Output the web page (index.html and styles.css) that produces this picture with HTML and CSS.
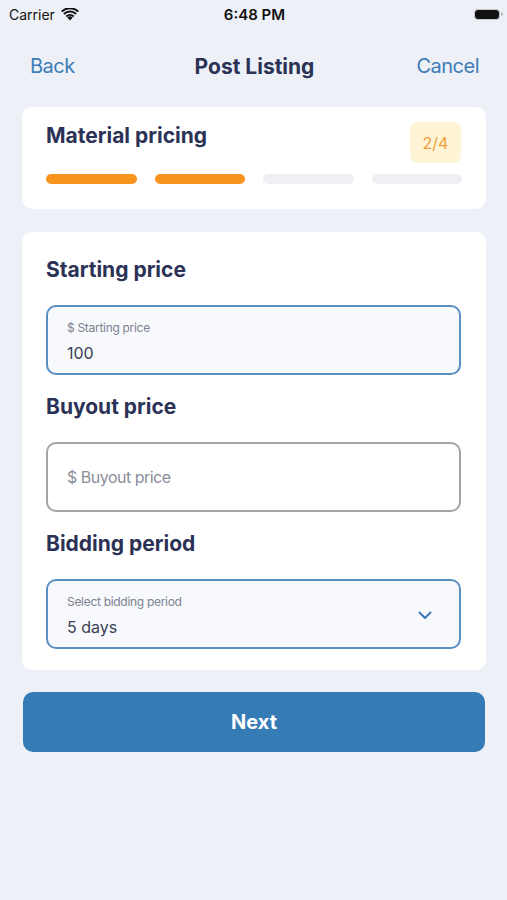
FILE: index.html
```html
<!DOCTYPE html>
<html lang="en">
<head>
    <meta charset="UTF-8">
    <meta name="viewport" content="width=device-width, initial-scale=1.0">
    <title>Post Listing</title>
    <link rel="stylesheet" href="styles.css">
</head>
<body>
    <div class="status-bar">
        <div class="carrier">
            Carrier
            <svg class="wifi" width="18" height="13" viewBox="0 0 18 13">
                <path d="M9 12.5 L6.3 9.6 A4 4 0 0 1 11.7 9.6 Z" fill="#111"/>
                <path d="M4.6 7.8 A6.4 6.4 0 0 1 13.4 7.8 L12.1 9.2 A4.6 4.6 0 0 0 5.9 9.2 Z" fill="#111"/>
                <path d="M2.2 5.3 A9.8 9.8 0 0 1 15.8 5.3 L14.5 6.7 A8 8 0 0 0 3.5 6.7 Z" fill="#111"/>
                <path d="M0 2.9 A13 13 0 0 1 18 2.9 L16.7 4.3 A11.2 11.2 0 0 0 1.3 4.3 Z" fill="#111"/>
            </svg>
        </div>
        <div class="time">6:48 PM</div>
        <div class="battery"><span class="battery-level"></span></div>
    </div>

    <div class="nav">
        <span class="nav-link">Back</span>
        <span class="nav-title">Post Listing</span>
        <span class="nav-link">Cancel</span>
    </div>

    <div class="content">
        <div class="card step-card">
            <div class="step-head">
                <h2>Material pricing</h2>
                <span class="step-badge">2/4</span>
            </div>
            <div class="steps">
                <span class="step done"></span>
                <span class="step done"></span>
                <span class="step"></span>
                <span class="step"></span>
            </div>
        </div>

        <form class="card form-card" id="pricingForm">
            <label class="field-title" for="startPrice">Starting price</label>
            <div class="field active">
                <span class="field-label">$ Starting price</span>
                <input type="text" id="startPrice" value="100">
            </div>

            <label class="field-title" for="buyoutPrice">Buyout price</label>
            <div class="field empty">
                <input type="text" id="buyoutPrice" placeholder="$ Buyout price">
            </div>

            <label class="field-title" for="period">Bidding period</label>
            <div class="field active select">
                <div>
                    <span class="field-label">Select bidding period</span>
                    <div class="field-value" id="period">5 days</div>
                </div>
                <svg class="chevron" width="14" height="9" viewBox="0 0 14 9">
                    <path d="M1.5 1.5 L7 7 L12.5 1.5" fill="none" stroke="#3a7ab5" stroke-width="2" stroke-linecap="round" stroke-linejoin="round"/>
                </svg>
            </div>
        </form>

        <button type="button" class="next-btn">Next</button>
    </div>
</body>
</html>
```

FILE: styles.css
```css
body {
    font-family: 'Inter', 'Noto Sans', sans-serif;
    background-color: #edf0f6;
    margin: 0;
    width: 507px;
    min-height: 900px;
}
.status-bar {
    height: 28px;
    display: flex;
    align-items: center;
    justify-content: space-between;
    padding: 0 7px 0 9px;
    font-size: 14px;
    color: #111;
}
.carrier {
    display: flex;
    align-items: center;
    gap: 6px;
    width: 120px;
}
.time {
    font-weight: 600;
    font-size: 15px;
}
.battery {
    width: 120px;
    display: flex;
    justify-content: flex-end;
}
.battery-level {
    display: block;
    width: 24px;
    height: 9px;
    background: #111;
    border: 1.5px solid #c4c6cc;
    border-radius: 4px;
    position: relative;
}
.battery-level::after {
    content: "";
    position: absolute;
    right: -4px;
    top: 2.5px;
    width: 2px;
    height: 4px;
    background: #b5b7bd;
    border-radius: 0 2px 2px 0;
}
.nav {
    height: 76px;
    display: flex;
    align-items: center;
    justify-content: space-between;
    padding: 0 28px 0 30px;
}
.nav-link {
    font-size: 20px;
    color: #3d7db8;
    width: 80px;
    letter-spacing: -0.5px;
}
.nav-link:last-child {
    text-align: right;
}
.nav-title {
    font-size: 21px;
    font-weight: 700;
    color: #2b3256;
}
.content {
    padding: 3px 21px 0 22px;
}
.card {
    background: #ffffff;
    border-radius: 10px;
    padding: 15px 24px 25px;
}
h2 {
    margin: 2px 0 0;
    font-size: 21px;
    line-height: 24px;
    font-weight: 700;
    color: #2b3256;
}
.step-head {
    display: flex;
    justify-content: space-between;
    align-items: flex-start;
}
.step-badge {
    width: 51px;
    height: 41px;
    border-radius: 8px;
    background: #fff3d6;
    color: #f0a038;
    font-size: 16px;
    display: flex;
    align-items: center;
    justify-content: center;
    margin-right: 1px;
}
.steps {
    display: grid;
    grid-template-columns: repeat(4, 1fr);
    gap: 18px;
    margin-top: 11px;
}
.step {
    height: 10px;
    border-radius: 5px;
    background: #eef0f4;
}
.step.done {
    background: #f7941d;
}
.form-card {
    margin-top: 23px;
    padding: 26px 24px 21px;
}
.field-title {
    display: block;
    font-size: 21px;
    line-height: 24px;
    font-weight: 700;
    color: #2b3256;
    margin-bottom: 23px;
}
.field {
    height: 70px;
    box-sizing: border-box;
    border: 2px solid #a3a4aa;
    border-radius: 10px;
    padding: 0 19px;
    margin: 0 1px 20px 0;
    display: flex;
    flex-direction: column;
    justify-content: center;
}
.field:last-child {
    margin-bottom: 0;
}
.field.active {
    border-color: #5b8fc2;
    background: #f7f9fc;
    justify-content: flex-start;
    padding-top: 13px;
}
.field-label {
    display: block;
    font-size: 12px;
    line-height: 16px;
    color: #7d8190;
    letter-spacing: -0.3px;
}
input, .field-value {
    border: none;
    outline: none;
    background: transparent;
    padding: 0;
    margin: 6px 0 0;
    font-family: inherit;
    font-size: 16px;
    line-height: 22px;
    color: #3a3f55;
    width: 100%;
}
.field.empty input {
    margin: 0;
}
input::placeholder {
    color: #8a8d9a;
    letter-spacing: -0.5px;
}
.field.select {
    flex-direction: row;
    justify-content: space-between;
    align-items: flex-start;
}
.chevron {
    margin: 17px 8px 0 0;
}
.next-btn {
    display: block;
    width: 462px;
    height: 60px;
    margin: 22px 0 0 1px;
    background: #357bb5;
    color: #ffffff;
    border: none;
    border-radius: 10px;
    font-family: inherit;
    font-size: 20px;
    font-weight: 700;
    cursor: pointer;
}
```
